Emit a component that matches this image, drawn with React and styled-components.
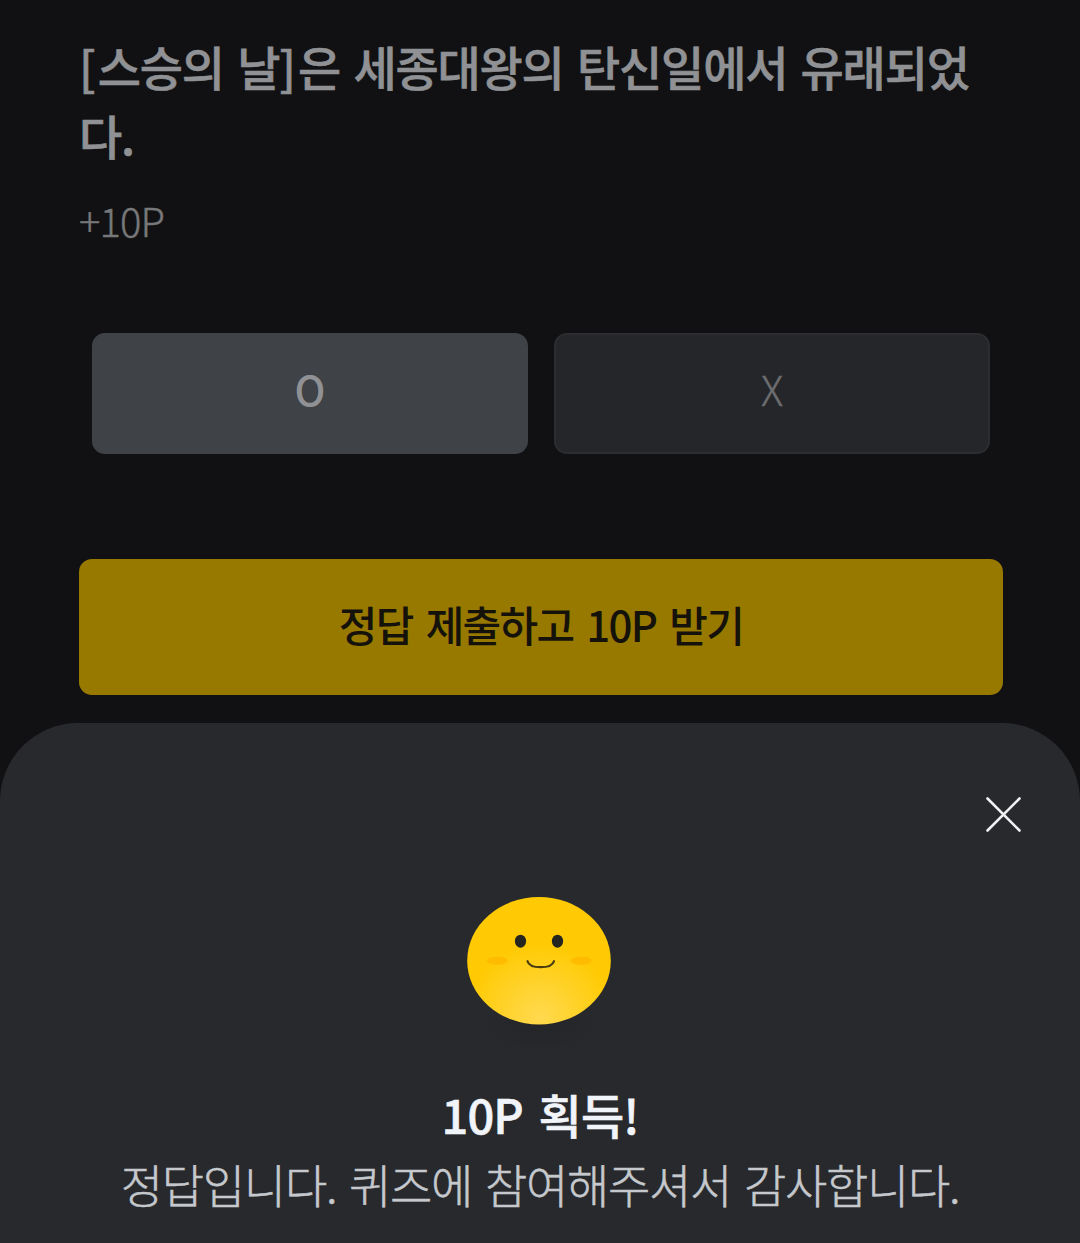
import React from "react";
import styled, { createGlobalStyle } from "styled-components";

const GlobalStyle = createGlobalStyle`
  * {
    box-sizing: border-box;
  }

  body {
    margin: 0;
    background-color: #111113;
    font-family: "Noto Sans CJK KR", sans-serif;
  }
`;

const Page = styled.div`
  display: flex;
  flex-direction: column;
  height: 1243px;
  overflow: hidden;
  background-color: #111113;
`;

const Quiz = styled.main`
  height: 723px;
  padding: 31px 77px 0 79px;
`;

const Question = styled.h1`
  margin: 0;
  color: #909194;
  font-size: 47px;
  font-weight: 500;
  line-height: 69px;
  letter-spacing: -1.2px;
  word-spacing: 4px;
  -webkit-text-stroke: 0.6px;
`;

const Bracket = styled.span`
  letter-spacing: 2px;
`;

const Point = styled.p`
  margin: 21px 0 0;
  color: #77787a;
  font-size: 40px;
  font-weight: 300;
  line-height: 60px;
  letter-spacing: -0.9px;
  -webkit-text-stroke: 0.4px;
`;

const Options = styled.div`
  display: flex;
  gap: 26px;
  margin: 83px 13px 0;
`;

const Option = styled.button`
  flex: 1;
  height: 121px;
  padding: 0 0 12px;
  border: 2px solid ${({ $selected }) => ($selected ? "#3f4246" : "#2c2d30")};
  border-radius: 13px;
  background-color: ${({ $selected }) => ($selected ? "#3f4246" : "#25262a")};
  color: ${({ $selected }) => ($selected ? "#909194" : "#6c6d70")};
  font-family: inherit;
  font-size: 41px;
  font-weight: ${({ $selected }) => ($selected ? 500 : 300)};
  -webkit-text-stroke: ${({ $selected }) => ($selected ? "0" : "0.4px")};
`;

const Submit = styled.button`
  display: block;
  width: 100%;
  height: 136px;
  margin-top: 105px;
  padding: 0 0 8px;
  border: 0;
  border-radius: 13px;
  background-color: #987900;
  color: #14120a;
  font-family: inherit;
  font-size: 42px;
  font-weight: 500;
  letter-spacing: -1.7px;
  word-spacing: 5.2px;
`;

const Sheet = styled.section`
  display: flex;
  flex-direction: column;
  align-items: center;
  height: 520px;
  padding-top: 74px;
  border-radius: 78px 78px 0 0;
  background-color: #28292d;
`;

const Close = styled.button`
  align-self: flex-end;
  width: 35px;
  height: 35px;
  margin-right: 59px;
  padding: 0;
  border: 0;
  background: none;

  svg {
    display: block;
  }
`;

const Face = styled.svg`
  display: block;
  margin-top: 54px;
`;

const Title = styled.h2`
  margin: 23px 0 -1px;
  color: #f1f4f9;
  font-size: 47px;
  font-weight: 500;
  line-height: 70px;
  letter-spacing: -0.9px;
  word-spacing: 6px;
  -webkit-text-stroke: 0.6px;
`;

const Message = styled.p`
  margin: 0;
  color: #c5c9cd;
  font-size: 46px;
  font-weight: 300;
  line-height: 70px;
  letter-spacing: -1.3px;
  word-spacing: 4px;
  white-space: nowrap;
  -webkit-text-stroke: 0.5px;
`;

export default () => (
  <Page>
    <GlobalStyle />
    <Quiz>
      <Question>
        <Bracket>[</Bracket>스승의 날<Bracket>]</Bracket>은 세종대왕의
        탄신일에서 유래되었
        <br />
        다.
      </Question>
      <Point>+10P</Point>
      <Options>
        <Option $selected>O</Option>
        <Option>X</Option>
      </Options>
      <Submit>정답 제출하고 10P 받기</Submit>
    </Quiz>
    <Sheet>
      <Close aria-label="닫기">
        <svg
          width="35"
          height="35"
          viewBox="0 0 35 35"
          stroke="#f0f0f0"
          strokeWidth="2.6"
          strokeLinecap="round"
        >
          <path d="M1.5 1.5l32 32M33.5 1.5l-32 32" />
        </svg>
      </Close>
      <Face width="180" height="170" viewBox="0 0 180 170">
        <defs>
          <radialGradient
            id="skin"
            gradientUnits="userSpaceOnUse"
            cx="90"
            cy="132"
            r="74"
          >
            <stop offset="0" stopColor="#ffd94f" />
            <stop offset="0.45" stopColor="#ffd32e" />
            <stop offset="1" stopColor="#ffca03" />
          </radialGradient>
          <radialGradient id="shadow">
            <stop offset="0" stopColor="#242528" />
            <stop offset="0.6" stopColor="#26272a" />
            <stop offset="1" stopColor="#28292d" />
          </radialGradient>
        </defs>
        <ellipse cx="90" cy="137" rx="53" ry="30" fill="url(#shadow)" />
        <ellipse cx="89" cy="74.7" rx="71.8" ry="63.7" fill="url(#skin)" />
        <ellipse cx="47.3" cy="74.7" rx="10.5" ry="4" fill="#ffbb00" />
        <ellipse cx="131.3" cy="74.7" rx="10.5" ry="4" fill="#ffbb00" />
        <ellipse cx="70.5" cy="55.2" rx="5.6" ry="6.5" fill="#25251f" />
        <ellipse cx="107.5" cy="55.2" rx="5.6" ry="6.5" fill="#25251f" />
        <path
          d="M77.5 75.2C78.7 79.3 83.5 81.2 90.5 81.2C97.5 81.2 102.8 79.3 104 75.2"
          fill="none"
          stroke="#4a3d12"
          strokeWidth="2.2"
          strokeLinecap="round"
        />
      </Face>
      <Title>10P 획득!</Title>
      <Message>정답입니다. 퀴즈에 참여해주셔서 감사합니다.</Message>
    </Sheet>
  </Page>
);
